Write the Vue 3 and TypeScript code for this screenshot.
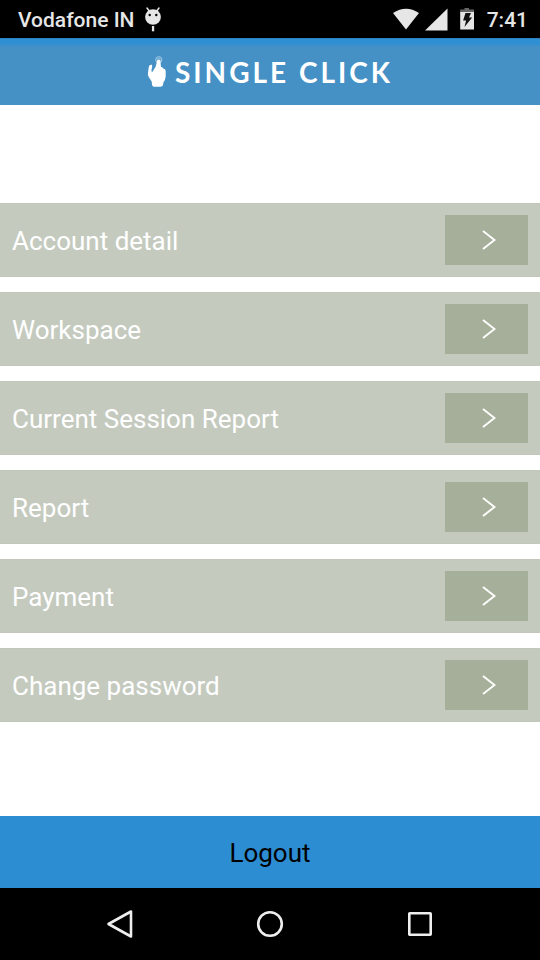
<script setup lang="ts">
interface MenuEntry {
  id: string
  label: string
}

const entries: MenuEntry[] = [
  { id: 'account', label: 'Account detail' },
  { id: 'workspace', label: 'Workspace' },
  { id: 'session-report', label: 'Current Session Report' },
  { id: 'report', label: 'Report' },
  { id: 'payment', label: 'Payment' },
  { id: 'password', label: 'Change password' },
]
</script>

<template>
  <div class="screen">
    <div class="status">
      <div class="status-group">
        <span>Vodafone IN</span>
        <svg class="robot" width="18" height="26" viewBox="0 0 18 26" aria-hidden="true">
          <path d="M3 2l3 4M15 2l-3 4" stroke="#e6e6e6" stroke-width="1.5" stroke-linecap="round" />
          <ellipse cx="9" cy="11" rx="7.9" ry="7.8" fill="#e6e6e6" />
          <rect x="7.9" y="20" width="2.3" height="5.3" fill="#e6e6e6" />
          <circle cx="5.7" cy="9" r="1.2" fill="#000" />
          <circle cx="12.3" cy="9" r="1.2" fill="#000" />
        </svg>
      </div>
      <div class="status-group">
        <svg class="signals" width="84" height="24" viewBox="0 0 84 24" aria-hidden="true">
          <path d="M0 6Q13 -2.500 26 6L13 22.500Z" fill="#e6e6e6" />
          <path d="M54.500 1.500V23.500H32Z" fill="#e6e6e6" />
          <path d="M71.500 1h4.500v1.500h5V6H67.200V2.500h4.300z" fill="#666" />
          <path d="M67.200 5h13.800V22.500H67.200z" fill="#e6e6e6" />
          <path d="M72.500 6h5.500L76 10.500h3.200L71.500 20l1.600-6.500h-3z" fill="#111" />
        </svg>
        <span>7:41</span>
      </div>
    </div>

    <header class="brand">
      <svg width="20" height="32" viewBox="0 0 20 32" aria-hidden="true">
        <circle cx="11.800" cy="3.800" r="3.100" fill="none" stroke="#c3dced" stroke-width="0.800" />
        <circle cx="11.800" cy="3.800" r="1.500" fill="none" stroke="#c3dced" stroke-width="0.600" />
        <path
          d="M10.200 4.500Q11.800 2.500 13.400 4.700L14 11Q15.600 10.500 16.200 12.400Q18.500 12.200 18.700 15V20.500Q18.300 24 16.400 26.500L16 29Q15.800 30.800 12 30.800H8Q5.200 30.800 5 28.500L4.700 25.500L2 21.500Q.2 18.600 1 16.500L1.800 11Q2.300 8.200 4.900 8.800L5.200 10.500L4.400 14.500L5 16.500L8.600 10.800Z"
          fill="#fff"
        />
      </svg>
      <h1>SINGLE CLICK</h1>
    </header>

    <main class="content">
      <ul class="menu">
        <li v-for="entry in entries" :key="entry.id" class="row">
          <span :id="entry.id" class="label">{{ entry.label }}</span>
          <button type="button" class="open" :aria-labelledby="entry.id">
            <svg width="14" height="22" viewBox="0 0 14 22" aria-hidden="true">
              <path d="M1 2L12.500 11L1 20" fill="none" stroke="#fff" stroke-width="1.900" />
            </svg>
          </button>
        </li>
      </ul>
    </main>

    <button type="button" class="logout">Logout</button>

    <nav class="system">
      <button type="button" aria-label="Back">
        <svg width="30" height="30" viewBox="0 0 30 30">
          <path d="M3.500 15L26 2.500V27.500Z" />
        </svg>
      </button>
      <button type="button" aria-label="Home">
        <svg width="30" height="30" viewBox="0 0 30 30">
          <circle cx="15" cy="15" r="11.800" />
        </svg>
      </button>
      <button type="button" aria-label="Recent apps">
        <svg width="30" height="30" viewBox="0 0 30 30">
          <rect x="4.300" y="4.300" width="21.400" height="21.400" rx="0.500" />
        </svg>
      </button>
    </nav>
  </div>
</template>

<style>
body {
  margin: 0;
}
</style>

<style scoped>
.screen {
  display: flex;
  flex-direction: column;
  min-height: 100vh;
  background: #fff;
  font-family: Roboto, 'Noto Sans', sans-serif;
}

button {
  border: 0;
  padding: 0;
  font: inherit;
  cursor: pointer;
}

svg {
  display: block;
}

.status {
  display: flex;
  justify-content: space-between;
  align-items: center;
  height: 38px;
  padding: 0 12px 0 18px;
  background: #000;
  color: #e6e6e6;
  font-size: 21px;
  font-weight: 500;
  line-height: 38px;
}

.status-group {
  display: flex;
  align-items: center;
  gap: 10px;
}

.status-group span {
  padding-top: 2px;
  line-height: 24px;
}

.brand {
  display: flex;
  align-items: center;
  justify-content: center;
  gap: 8px;
  box-sizing: border-box;
  height: 67px;
  border-top: 1px solid #2d7fbd;
  background: linear-gradient(#2d8fd5 0, #3190d1 5px, #4591c6 8px, #4591c6 100%);
  color: #fff;
}

.brand h1 {
  margin: 0;
  font-family: Lato, sans-serif;
  font-size: 28px;
  font-weight: 700;
  line-height: 36px;
  letter-spacing: 3px;
}

.content {
  display: flex;
  flex: 1;
  align-items: center;
  padding: 4px 0 0;
}

.menu {
  display: flex;
  flex: 1;
  flex-direction: column;
  gap: 15px;
  margin: 0;
  padding: 0;
  list-style: none;
}

.row {
  display: flex;
  align-items: center;
  justify-content: space-between;
  box-sizing: border-box;
  height: 74px;
  padding: 0 12px;
  border: 1px solid #c2c7b9;
  border-width: 1px 0;
  background: #c5cabf;
}

.label {
  padding-top: 2px;
  color: #fff;
  font-size: 26px;
  line-height: 32px;
}

.open {
  display: flex;
  align-items: center;
  justify-content: center;
  width: 83px;
  height: 50px;
  padding-left: 4px;
  background: #a6af99;
}

.logout {
  height: 72px;
  padding-top: 2px;
  background: #2d8dd2;
  color: #000;
  font-size: 26px;
  line-height: 32px;
}

.system {
  display: flex;
  justify-content: center;
  gap: 120px;
  height: 72px;
  background: #000;
}

.system button {
  background: none;
}

.system svg {
  fill: none;
  stroke: #eee;
  stroke-width: 2.6;
  stroke-linejoin: round;
}
</style>
